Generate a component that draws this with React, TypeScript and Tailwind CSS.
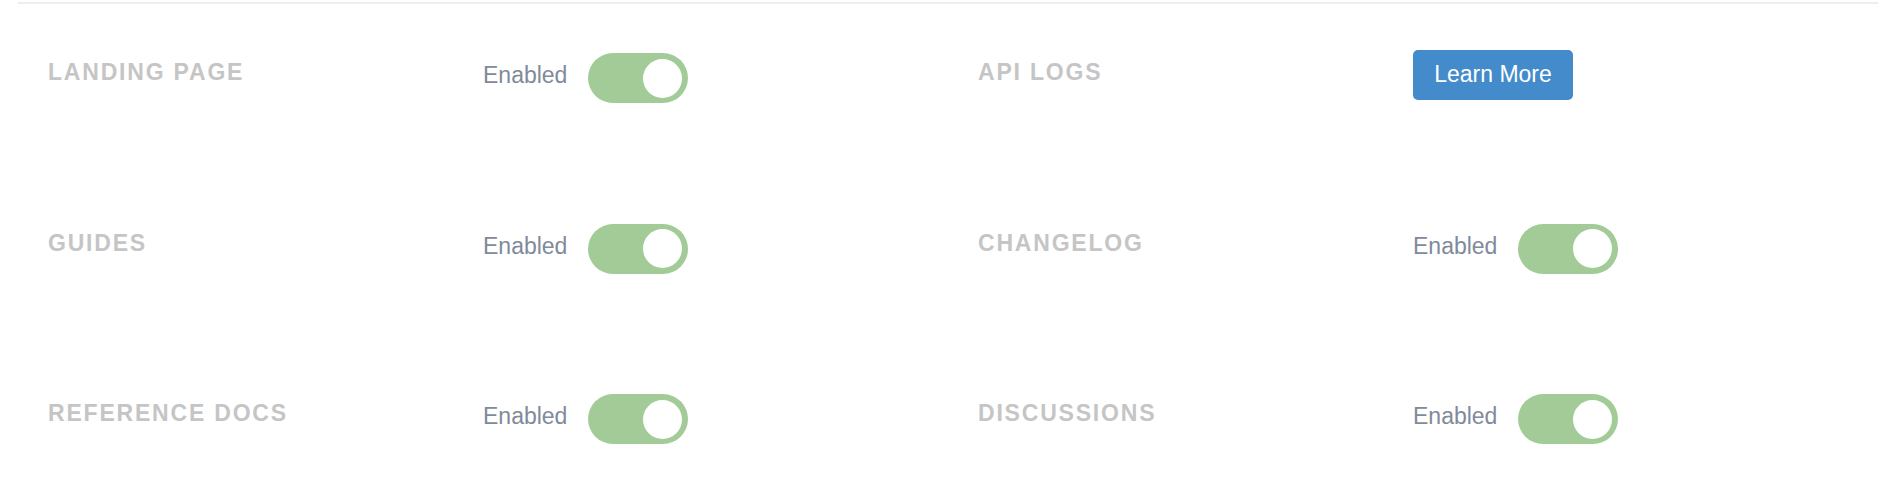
import React from 'react';

type Row = {
  left: string;
  right: string;
  rightKind: 'toggle' | 'button';
};

const rows: Row[] = [
  { left: 'LANDING PAGE', right: 'API LOGS', rightKind: 'button' },
  { left: 'GUIDES', right: 'CHANGELOG', rightKind: 'toggle' },
  { left: 'REFERENCE DOCS', right: 'DISCUSSIONS', rightKind: 'toggle' },
];

const Label: React.FC<{ text: string }> = ({ text }) => (
  <div className="flex h-[50px] items-start pt-[8px]">
    <span className="text-[23px] font-bold leading-none tracking-[1.8px] text-[#c5c5c5]">{text}</span>
  </div>
);

const Toggle: React.FC = () => (
  <div className="flex h-[50px] items-center">
    <span className="mb-[5px] mr-[21px] text-[23px] leading-none text-[#7f8a9a]">Enabled</span>
    <button className="flex h-[50px] w-[100px] items-center justify-end rounded-full bg-[#a2cb98] pr-[6px]">
      <span className="block h-[39px] w-[39px] rounded-full bg-white" />
    </button>
  </div>
);

const LearnMore: React.FC = () => (
  <div className="flex h-[50px] items-start">
    <button className="-mt-[3px] flex h-[50px] w-[160px] items-center justify-center rounded-[5px] bg-[#438bca] pb-[2px] text-[23px] leading-none text-white">
      Learn More
    </button>
  </div>
);

export default function App() {
  return (
    <div className="h-[504px] w-full bg-white font-['Liberation_Sans',Arial,sans-serif]">
      <div className="pl-[18px] pr-[16px] pt-[2px]">
        <div className="border-t-2 border-[#eeeeee]" />
      </div>
      <div className="grid grid-cols-[435px_495px_435px_1fr] gap-y-[120.5px] pl-[48px] pt-[49px]">
        {rows.map(row => (
          <React.Fragment key={row.left}>
            <Label text={row.left} />
            <Toggle />
            <Label text={row.right} />
            {row.rightKind === 'button' ? <LearnMore /> : <Toggle />}
          </React.Fragment>
        ))}
      </div>
    </div>
  );
}
